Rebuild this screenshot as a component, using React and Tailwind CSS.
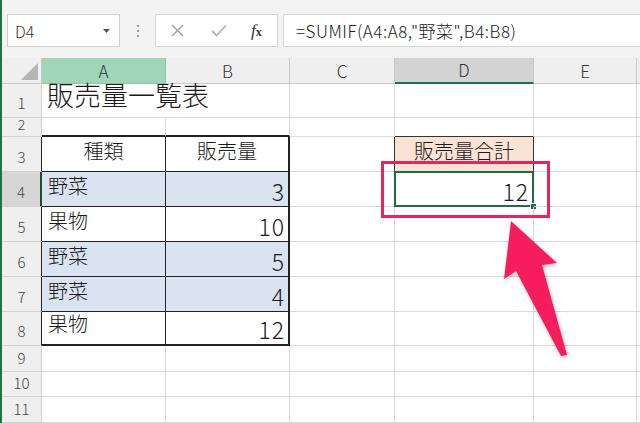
import React from "react";
import { twMerge } from "tailwind-merge";

const FONT = "font-['Noto_Sans_CJK_JP','Liberation_Sans',sans-serif]";

function Cell({ className = "", children }) {
  return (
    <div
      className={twMerge(
        "relative flex items-end pb-[5px] px-[6px] leading-none text-[20px] font-light text-[#1a1a1a] whitespace-nowrap border-r border-b border-[#d9d9d9]",
        className
      )}
    >
      {children}
    </div>
  );
}

function Num({ children }) {
  return <span className="text-[23px] tracking-[1px] leading-[20px]">{children}</span>;
}

function RowHead({ n, className = "" }) {
  return (
    <div
      className={twMerge(
        "flex items-end justify-center pb-[3px] leading-none text-[15px] font-light text-[#444] bg-[#efefef] border-r border-b border-[#d2d2d2]",
        className
      )}
    >
      {n}
    </div>
  );
}

function ColHead({ l, className = "" }) {
  return (
    <div
      className={twMerge(
        "flex items-center justify-center leading-none text-[17px] font-light text-[#333] bg-[#efefef] border-r border-b border-[#c9c9c9]",
        className
      )}
    >
      {l}
    </div>
  );
}

export default function App() {
  const blue = "bg-[#dae3f0]";
  return (
    <div className={`relative w-[640px] h-[423px] overflow-hidden bg-white flex ${FONT}`}>
      <div className="w-[2px] shrink-0 bg-[#217346]" />
      <div className="flex-1 flex flex-col min-w-0">
        {/* toolbar */}
        <div className="h-[58px] shrink-0 bg-[#f3f3f3] flex items-start pt-[14px]">
          <div className="ml-[5px] w-[113px] h-[33px] bg-white border border-[#d0d0d0] flex items-center justify-between pl-[7px] pr-[9px]">
            <span className="text-[16px] font-light text-[#333] leading-none">D4</span>
            <svg width="7" height="4" viewBox="0 0 7 4"><path d="M0 0H7L3.5 4Z" fill="#555" /></svg>
          </div>
          <div className="w-[35px] h-[33px] flex flex-col items-center justify-center gap-[3px]">
            <span className="w-[2px] h-[2px] bg-[#9a9a9a]" />
            <span className="w-[2px] h-[2px] bg-[#9a9a9a]" />
            <span className="w-[2px] h-[2px] bg-[#9a9a9a]" />
          </div>
          <div className="w-[123px] h-[33px] bg-white border border-[#d6d6d6] flex items-center pl-[14px]">
            <svg width="13" height="13" viewBox="0 0 13 13" className="ml-[1px]"><path d="M1 1L12 12M12 1L1 12" stroke="#a8a8a8" strokeWidth="1.6" /></svg>
            <svg width="16" height="13" viewBox="0 0 16 13" className="ml-[27px]"><path d="M1 7L5.5 11.5L15 1.5" stroke="#b3b3b3" strokeWidth="1.8" fill="none" /></svg>
            <span className="ml-[24px] font-['Liberation_Serif',serif] italic text-[17px] text-[#333] leading-none">
              f<span className="text-[12px] not-italic font-bold">x</span>
            </span>
          </div>
          <div className="ml-[5px] flex-1 h-[33px] bg-white border border-[#d6d6d6] border-r-0 flex items-center pl-[12px] text-[17px] tracking-[0.5px] font-light text-[#222] leading-none whitespace-nowrap">
            =SUMIF(A4:A8,"野菜",B4:B8)
          </div>
        </div>

        {/* sheet */}
        <div className="flex-1 grid grid-cols-[40px_124px_124px_105px_139px_103px_1fr] grid-rows-[26px_34px_19px_35px_35px_35px_35px_35px_34px_26px_25px_26px]">
          {/* header row */}
          <div className="relative bg-[#efefef] border-r border-b border-[#c9c9c9]">
            <svg width="17" height="17" viewBox="0 0 17 17" className="absolute right-[3px] bottom-[3px]"><path d="M17 0V17H0Z" fill="#b5b5b5" /></svg>
          </div>
          <ColHead l="A" className="bg-[#9fd6b8] border-[#8cc4a5]" />
          <ColHead l="B" />
          <ColHead l="C" />
          <ColHead l="D" className="bg-[#d3d3d3] border-b-2 border-b-[#217346]" />
          <ColHead l="E" />
          <ColHead l="" className="border-r-0" />

          {/* row 1 */}
          <RowHead n="1" />
          <Cell className="z-10 border-r-0 text-[27px] pb-[2px] pl-[5px]">販売量一覧表</Cell>
          <Cell />
          <Cell />
          <Cell />
          <Cell />
          <Cell className="border-r-0" />

          {/* row 2 */}
          <RowHead n="2" className="pb-[1px] text-[14px]" />
          <Cell className="border-b-2 border-b-[#222]" />
          <Cell className="border-b-2 border-b-[#222]" />
          <Cell />
          <Cell className="border-b-[#333]" />
          <Cell />
          <Cell className="border-r-0" />

          {/* row 3 */}
          <RowHead n="3" className="border-r-[#222]" />
          <Cell className="justify-center border-r-[#222] border-b-[#222]">種類</Cell>
          <Cell className="justify-center border-r-2 border-r-[#222] border-b-[#222]">販売量</Cell>
          <Cell className="border-r-[#333]" />
          <Cell className="justify-center bg-[#fbe3d4] border-r-[#333] border-b-[#333] text-[20px]">販売量合計</Cell>
          <Cell />
          <Cell className="border-r-0" />

          {/* row 4 */}
          <RowHead n="4" className="bg-[#d6d6d6] border-r-2 border-r-[#1e4f33]" />
          <Cell className={`${blue} border-r-[#222] border-b-[#222]`}>野菜</Cell>
          <Cell className={`${blue} justify-end pr-[3px] border-r-2 border-r-[#222] border-b-[#222]`}><Num>3</Num></Cell>
          <Cell />
          <Cell className="justify-end pr-[4px]">
            <Num>12</Num>
            <div className="absolute -left-[1px] -top-[1px] -right-[1px] -bottom-[1px] border-2 border-[#1e6e42]" />
            <div className="absolute -right-[4px] -bottom-[4px] w-[7px] h-[7px] bg-[#1e6e42] border border-white" />
          </Cell>
          <Cell />
          <Cell className="border-r-0" />

          {/* row 5 */}
          <RowHead n="5" className="border-r-[#222]" />
          <Cell className="border-r-[#222] border-b-[#222]">果物</Cell>
          <Cell className="justify-end pr-[3px] border-r-2 border-r-[#222] border-b-[#222]"><Num>10</Num></Cell>
          <Cell />
          <Cell />
          <Cell />
          <Cell className="border-r-0" />

          {/* row 6 */}
          <RowHead n="6" className="border-r-[#222]" />
          <Cell className={`${blue} border-r-[#222] border-b-[#222]`}>野菜</Cell>
          <Cell className={`${blue} justify-end pr-[3px] border-r-2 border-r-[#222] border-b-[#222]`}><Num>5</Num></Cell>
          <Cell />
          <Cell />
          <Cell />
          <Cell className="border-r-0" />

          {/* row 7 */}
          <RowHead n="7" className="border-r-[#222]" />
          <Cell className={`${blue} border-r-[#222] border-b-[#222]`}>野菜</Cell>
          <Cell className={`${blue} justify-end pr-[3px] border-r-2 border-r-[#222] border-b-[#222]`}><Num>4</Num></Cell>
          <Cell />
          <Cell />
          <Cell />
          <Cell className="border-r-0" />

          {/* row 8 */}
          <RowHead n="8" className="border-r-[#222]" />
          <Cell className="border-r-[#222] border-b-2 border-b-[#222]">果物</Cell>
          <Cell className="justify-end pr-[3px] border-r-2 border-r-[#222] border-b-2 border-b-[#222]"><Num>12</Num></Cell>
          <Cell />
          <Cell />
          <Cell />
          <Cell className="border-r-0" />

          {/* rows 9-11 */}
          {["9", "10", "11"].map((n) => (
            <React.Fragment key={n}>
              <RowHead n={n} className="pb-[2px]" />
              <Cell />
              <Cell />
              <Cell />
              <Cell />
              <Cell />
              <Cell className="border-r-0" />
            </React.Fragment>
          ))}
        </div>
      </div>

      {/* annotation: red frame */}
      <div className="absolute left-[381px] top-[161px] w-[169px] h-[57px] border-[3px] border-[#e8245c] pointer-events-none" />
      {/* annotation: arrow */}
      <svg
        className="absolute left-0 top-0 pointer-events-none"
        width="640"
        height="423"
        viewBox="0 0 640 423"
      >
        <path
          d="M511 221 L557 263 L542 265 L567 355 L561 356 L516 271 L504 279 Z"
          fill="#f51d5d"
          style={{ filter: "drop-shadow(1px 2px 2px rgba(0,0,0,0.25))" }}
        />
      </svg>
    </div>
  );
}
